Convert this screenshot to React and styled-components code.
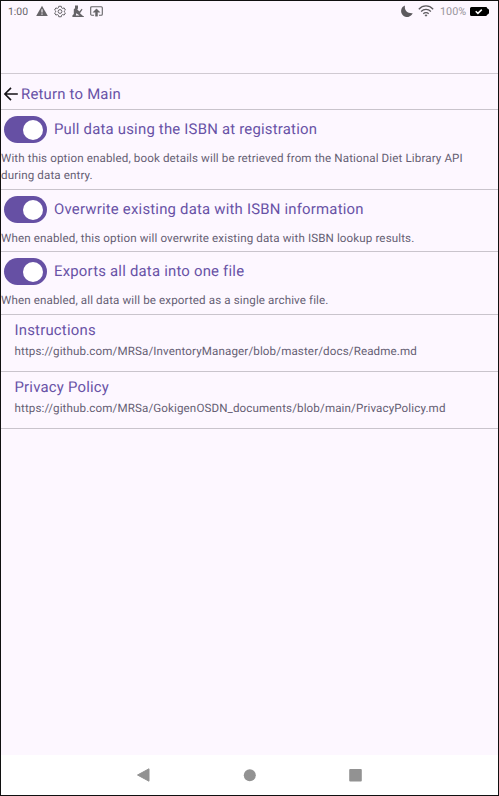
import React from "react";
import styled, { createGlobalStyle } from "styled-components";

const GlobalStyle = createGlobalStyle`
  * { box-sizing: border-box; }
  body { margin: 0; font-family: Roboto, "Liberation Sans", sans-serif; text-rendering: geometricPrecision; }
`;

const Screen = styled.div`
  width: 499px;
  height: 796px;
  display: flex;
  flex-direction: column;
  background: #fdf7ff;
  border: 1px solid #101010;
  overflow: hidden;
`;

const StatusBar = styled.header`
  height: 72px;
  flex: none;
  display: flex;
  align-items: flex-start;
  justify-content: space-between;
  padding: 0 9px 0 7px;
`;

const StatusGroup = styled.div`
  display: flex;
  align-items: center;
  height: 20px;
  gap: ${(p) => p.$gap}px;
  color: #666468;
  svg { display: block; flex: none; }
`;

const Clock = styled.span`
  font-size: 10.4px;
  width: 22px;
  margin-right: -0.5px;
  white-space: nowrap;
`;

const Percent = styled.span`
  font-size: 10.8px;
  width: 26px;
  margin-left: 1px;
  margin-right: -1px;
  color: #98949b;
  white-space: nowrap;
`;

const BackRow = styled.div`
  height: 36px;
  flex: none;
  display: flex;
  align-items: center;
  gap: 2px;
  padding: 4px 0 0 2px;
  border-top: 1px solid #d0cad2;
`;

const Title = styled.span`
  font-size: 14.9px;
  line-height: 20px;
  letter-spacing: 0.21px;
  color: #6852a6;
  white-space: nowrap;
`;

const Option = styled.section`
  height: ${(p) => p.$height}px;
  flex: none;
  border-top: 1px solid #c9c4cc;
`;

const OptionHead = styled.div`
  display: flex;
  align-items: center;
  gap: 7px;
  height: 39px;
  padding-left: 3px;
  ${Title} { margin-bottom: 1px; }
`;

const Switch = styled.span`
  width: 43px;
  height: 27px;
  flex: none;
  display: flex;
  align-items: center;
  justify-content: flex-end;
  padding-right: 4px;
  border-radius: 14px;
  background: #6650a4;
`;

const Thumb = styled.span`
  width: 20px;
  height: 20px;
  border-radius: 50%;
  background: #fff;
`;

const Detail = styled.p`
  margin: 0;
  padding-top: ${(p) => (p.$url ? 0 : 1)}px;
  font-size: 11.6px;
  line-height: 17px;
  letter-spacing: 0.12px;
  color: #665f74;
  white-space: pre-line;
`;

const LinkRow = styled.section`
  height: 57px;
  flex: none;
  display: flex;
  flex-direction: column;
  gap: 3px;
  padding: 5px 0 0 13.5px;
  border-top: 1px solid #c9c4cc;
`;

const Filler = styled.div`
  flex: 1;
  border-top: 1px solid #c9c4cc;
`;

const NavBar = styled.nav`
  height: 40px;
  flex: none;
  display: flex;
  align-items: center;
  justify-content: center;
  gap: 92px;
  background: #fff;
  color: #929292;
  svg { display: block; }
`;

const options = [
  { title: "Pull data using the ISBN at registration", detail: "With this option enabled, book details will be retrieved from the National Diet Library API\nduring data entry.", height: 80 },
  { title: "Overwrite existing data with ISBN information", detail: "When enabled, this option will overwrite existing data with ISBN lookup results.", height: 62.4 },
  { title: "Exports all data into one file", detail: "When enabled, all data will be exported as a single archive file.", height: 62.6 },
];

const links = [
  { title: "Instructions", url: "https://github.com/MRSa/InventoryManager/blob/master/docs/Readme.md" },
  { title: "Privacy Policy", url: "https://github.com/MRSa/GokigenOSDN_documents/blob/main/PrivacyPolicy.md" },
];

const WarningIcon = () => (
  <svg width="12" height="12" viewBox="0 0 12 12">
    <path d="M6 .8 11.8 11H.2Z" fill="currentColor" />
    <path d="M6 4.2v3.2M6 8.4v1.3" stroke="#fdf7ff" strokeWidth="1.1" />
  </svg>
);

const GearIcon = () => (
  <svg width="12" height="13" viewBox="0 0 24 24" fill="none" stroke="currentColor" strokeWidth="2" strokeLinejoin="round">
    <path d="M9.5 1.5h5l.7 3.1 2.1 1.2 3-.9 2.5 4.2-2.3 2.1v1.6l2.3 2.1-2.5 4.2-3-.9-2.1 1.2-.7 3.1h-5l-.7-3.1-2.1-1.2-3 .9-2.5-4.2 2.3-2.1v-1.6L1.2 9.1l2.5-4.2 3 .9 2.1-1.2Z" />
    <circle cx="12" cy="12" r="3.8" />
  </svg>
);

const DeskIcon = () => (
  <svg width="12" height="12" viewBox="0 0 12 12" fill="currentColor">
    <path d="M3 .6h3v2.8l-.8.9 2.2 2.3 2.3-2.8.8.7L8 8.200l3 2.700h.8V12H.4v-1.400l1.400-1.500V4.200L3 3.200Z" />
    <path d="M4.300 8.200 7.600 10.500H3.800Z" fill="#fdf7ff" />
  </svg>
);

const UploadIcon = () => (
  <svg width="13" height="11" viewBox="0 0 13 11" fill="none" stroke="currentColor">
    <path d="M4 9.2H1.7A1 1 0 0 1 .7 8.2V1.7a1 1 0 0 1 1-1h9.6a1 1 0 0 1 1 1v6.5a1 1 0 0 1-1 1H9" strokeWidth="1.1" />
    <path d="M6.5 2.8 10 6.3H7.6v3.9H5.4V6.3H3Z" fill="currentColor" strokeWidth=".4" />
  </svg>
);

const MoonIcon = () => (
  <svg width="12" height="12" viewBox="0 0 12 12">
    <path d="M4 .4C3 4.7 6.1 8.7 11.7 8.2A6 6 0 1 1 4 .4Z" fill="#5c5a5e" />
  </svg>
);

const WifiIcon = () => (
  <svg width="16" height="12" viewBox="0 0 16 12" fill="none" stroke="#5c5a5e" strokeWidth="1.25">
    <path d="M.8 4.2C5-.2 11-.2 15.2 4.2M3.1 6.5c2.8-2.9 7-2.9 9.8 0M5.3 8.7c1.5-1.6 3.9-1.6 5.4 0" />
    <path d="m8 11.8-1.5-1.7q1.5-1.2 3 0Z" fill="#5c5a5e" stroke="none" />
  </svg>
);

const BatteryIcon = () => (
  <svg width="19" height="9" viewBox="0 0 19 9">
    <path d="M1.5 0h14.3a1.4 1.4 0 0 1 1.4 1.4h.6L19 2.7v3.6l-1.2 1.3h-.6A1.4 1.4 0 0 1 15.8 9H1.5A1.5 1.5 0 0 1 0 7.5v-6A1.5 1.5 0 0 1 1.5 0Z" fill="#000" />
    <path d="m5.7 4.3 2.2 2.1 3.9-3.8" fill="none" stroke="#fff" strokeWidth="1.5" />
  </svg>
);

const BackArrow = () => (
  <svg width="16" height="16" viewBox="0 0 16 16" fill="none" stroke="#151217" strokeWidth="1.6">
    <path d="M14.8 8H2.3M8 1.9 1.9 8 8 14.1" />
  </svg>
);

export default function App() {
  return (
    <>
      <GlobalStyle />
      <Screen>
        <StatusBar>
          <StatusGroup $gap={6}>
            <Clock>1:00</Clock>
            <WarningIcon />
            <GearIcon />
            <DeskIcon />
            <UploadIcon />
          </StatusGroup>
          <StatusGroup $gap={5}>
            <MoonIcon />
            <WifiIcon />
            <Percent>100%</Percent>
            <BatteryIcon />
          </StatusGroup>
        </StatusBar>
        <BackRow>
          <BackArrow />
          <Title>Return to Main</Title>
        </BackRow>
        {options.map((o) => (
          <Option key={o.title} $height={o.height}>
            <OptionHead>
              <Switch><Thumb /></Switch>
              <Title>{o.title}</Title>
            </OptionHead>
            <Detail>{o.detail}</Detail>
          </Option>
        ))}
        {links.map((l) => (
          <LinkRow key={l.title}>
            <Title>{l.title}</Title>
            <Detail $url>{l.url}</Detail>
          </LinkRow>
        ))}
        <Filler />
        <NavBar>
          <svg width="14" height="14" viewBox="0 0 14 14"><path d="M12 .8v12.4L.5 7Z" fill="currentColor" stroke="currentColor" strokeLinejoin="round" /></svg>
          <svg width="14" height="14" viewBox="0 0 14 14"><circle cx="6.8" cy="7.3" r="6" fill="currentColor" /></svg>
          <svg width="14" height="14" viewBox="0 0 14 14"><rect x=".2" y="1" width="12.6" height="12.6" rx="1" fill="currentColor" /></svg>
        </NavBar>
      </Screen>
    </>
  );
}
